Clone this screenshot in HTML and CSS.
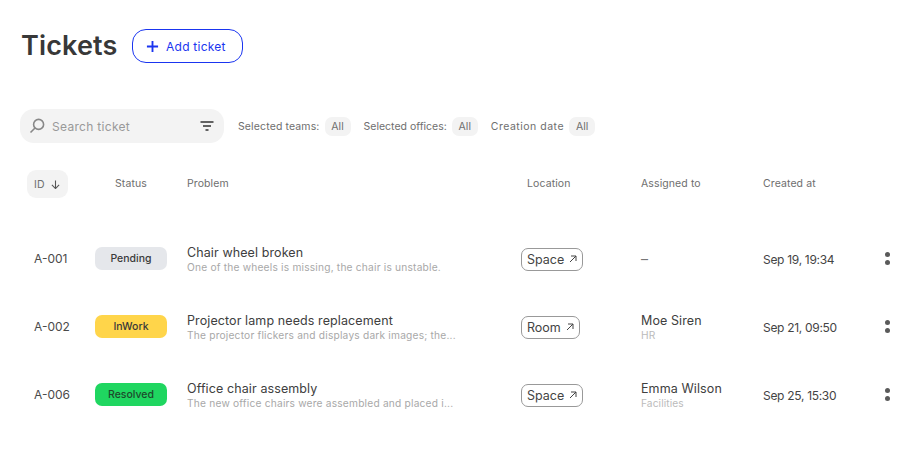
FILE: index.html
```html
<!DOCTYPE html>
<html lang="en">
<head>
<meta charset="utf-8">
<title>Tickets</title>
<link rel="stylesheet" href="styles.css">
</head>
<body>
<main class="page">
  <header class="top">
    <h1 class="title">Tickets</h1>
    <button class="add">
      <svg class="add-icon" viewBox="0 0 14 14"><path d="M7 1v12M1 7h12"/></svg>
      Add ticket
    </button>
  </header>

  <section class="filters">
    <div class="search">
      <svg class="search-icon" viewBox="0 0 16 16"><circle cx="9.6" cy="6.4" r="5"/><path d="M6 10 1.5 14.5"/></svg>
      <span class="search-text">Search ticket</span>
      <svg class="filter-icon" viewBox="0 0 14 10"><path d="M0.5 1h13M3 5h8M5.5 9h3"/></svg>
    </div>
    <div class="filter"><span class="teams">Selected teams:</span><span class="chip">All</span></div>
    <div class="filter"><span>Selected offices:</span><span class="chip">All</span></div>
    <div class="filter"><span class="created">Creation date</span><span class="chip">All</span></div>
  </section>

  <div class="table">
    <div class="row head">
      <div><span class="sort">ID
        <svg class="sort-icon" viewBox="0 0 10 10"><path d="M5 .5v9M1 5.5l4 4 4-4"/></svg></span></div>
      <div class="th th-status">Status</div>
      <div class="th">Problem</div>
      <div class="th th-loc">Location</div>
      <div class="th">Assigned to</div>
      <div class="th">Created at</div>
      <div></div>
    </div>

    <div class="row item">
      <div class="id">A-001</div>
      <div><span class="badge pending">Pending</span></div>
      <div class="cell"><div class="main">Chair wheel broken</div><div class="sub">One of the wheels is missing, the chair is unstable.</div></div>
      <div><span class="loc">Space<svg class="loc-icon" viewBox="0 0 8 8"><path d="M1 7 7 1M2 1h5v5"/></svg></span></div>
      <div class="cell"><div class="main dash">–</div></div>
      <div class="date">Sep 19, 19:34</div>
      <div class="more"><i></i><i></i></div>
    </div>

    <div class="row item">
      <div class="id">A-002</div>
      <div><span class="badge inwork">InWork</span></div>
      <div class="cell"><div class="main">Projector lamp needs replacement</div><div class="sub">The projector flickers and displays dark images; the...</div></div>
      <div><span class="loc">Room<svg class="loc-icon" viewBox="0 0 8 8"><path d="M1 7 7 1M2 1h5v5"/></svg></span></div>
      <div class="cell"><div class="main">Moe Siren</div><div class="sub light">HR</div></div>
      <div class="date">Sep 21, 09:50</div>
      <div class="more"><i></i><i></i></div>
    </div>

    <div class="row item">
      <div class="id">A-006</div>
      <div><span class="badge resolved">Resolved</span></div>
      <div class="cell"><div class="main">Office chair assembly</div><div class="sub">The new office chairs were assembled and placed i...</div></div>
      <div><span class="loc">Space<svg class="loc-icon" viewBox="0 0 8 8"><path d="M1 7 7 1M2 1h5v5"/></svg></span></div>
      <div class="cell"><div class="main">Emma Wilson</div><div class="sub light">Facilities</div></div>
      <div class="date">Sep 25, 15:30</div>
      <div class="more"><i></i><i></i></div>
    </div>
  </div>
</main>
</body>
</html>
```
FILE: styles.css
```css
* { box-sizing: border-box; }
html, body { margin: 0; height: 100%; background: #fff; }
body {
  font-family: Inter, "Liberation Sans", sans-serif;
  color: #333;
  overflow: hidden;
}
.page { width: 916px; height: 468px; padding: 29px 0 0 20px; }

.top { display: flex; align-items: center; gap: 14px; height: 34px; }
.title { margin: 0; padding-left: 1px; font-size: 27px; font-weight: 600; letter-spacing: .15px; color: #383838; line-height: 34px; width: 98px; white-space: nowrap; }
.add {
  display: flex; align-items: center; gap: 7px;
  width: 111px; height: 34px; padding: 0 0 0 13px;
  background: #fff; border: 1px solid #1a35f0; border-radius: 14px;
  color: #1a35f0; font: 400 12px Inter, sans-serif; letter-spacing: .25px;
}
.add-icon { width: 13px; height: 13px; fill: none; stroke: #1a35f0; stroke-width: 2; }

.filters { display: flex; align-items: center; margin-top: 46px; height: 34px; font-size: 10.5px; color: #6e6e6e; }
.search {
  display: flex; align-items: center;
  width: 204px; height: 34px; padding: 0 10px 0 9px;
  background: #f3f3f3; border-radius: 14px;
  margin-right: 14px;
}
.search-icon { width: 16px; height: 16px; fill: none; stroke: #888; stroke-width: 1.6; }
.search-text { margin-left: 7px; flex: 1; font-size: 12px; letter-spacing: .3px; color: #999; }
.filter-icon { width: 14px; height: 10px; fill: none; stroke: #333; stroke-width: 1.3; }
.filter { display: flex; align-items: center; gap: 5px; margin-right: 13px; white-space: nowrap; }
.teams { letter-spacing: .13px; }
.created { letter-spacing: .5px; }
.chip { display: inline-flex; align-items: center; justify-content: center; width: 26px; height: 19px; background: #f3f3f3; border-radius: 7px; color: #6e6e6e; }

.table { margin-top: 27px; }
.row {
  display: grid;
  grid-template-columns: 75px 92px 334px 120px 122px 117px 14px;
  align-items: center;
}
.head { height: 28px; font-size: 10.5px; letter-spacing: .1px; color: #6e6e6e; }
.head > :first-child { padding-left: 7px; }
.th { padding-bottom: 2px; }
.th-status { padding-left: 20px; }
.th-loc { padding-left: 6px; }
.sort { display: inline-flex; align-items: center; gap: 6px; width: 41px; height: 28px; padding-left: 7px; background: #f3f3f3; border-radius: 9px; }
.sort-icon { width: 9px; height: 9px; fill: none; stroke: #555; stroke-width: 1.2; }

.item { height: 68px; }
.head + .item { margin-top: 27px; }
.id { padding-left: 14px; padding-bottom: 2px; font-size: 12px; color: #4a4a4a; }
.badge {
  display: flex; align-items: center; justify-content: center;
  width: 72px; height: 23px; margin-bottom: 1px; border-radius: 7px;
  font-size: 10.5px; font-weight: 500; color: #3a3a3a;
}
.pending { background: #e5e7eb; }
.inwork { background: #ffd54a; }
.resolved { background: #1fd660; color: #1d4a2c; }
.main { padding-top: 2px; font-size: 12.5px; line-height: 14px; letter-spacing: .1px; color: #404040; white-space: nowrap; }
.sub { font-size: 10.2px; line-height: 14px; letter-spacing: .2px; color: #a8a8a8; white-space: nowrap; }
.light { letter-spacing: .1px; color: #bbb; }
.dash { margin-top: -2px; font-size: 14px; color: #777; }
.loc {
  display: inline-flex; align-items: center; gap: 5px;
  height: 23px; padding: 0 5px;
  border: 1px solid #999; border-radius: 7px;
  font-size: 12.5px; color: #444;
}
.loc-icon { width: 8px; height: 8px; fill: none; stroke: #444; stroke-width: 1; }
.date { font-size: 12px; letter-spacing: -.3px; color: #444; white-space: nowrap; }
.more { display: flex; flex-direction: column; align-items: center; gap: 3.5px; padding-bottom: 1px; }
.more i { width: 5px; height: 5px; border-radius: 50%; background: #5a5a5a; }
```
